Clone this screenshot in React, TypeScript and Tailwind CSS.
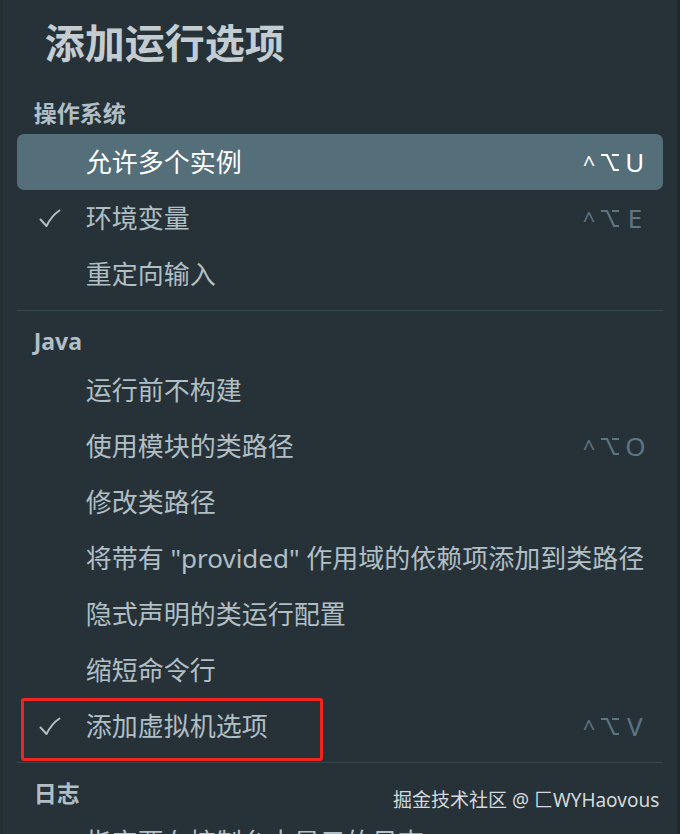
type Item = {
  label: string;
  checked?: boolean;
  active?: boolean;
  shortcut?: string;
  boxed?: boolean;
};

type Section = {
  title: string;
  items: Item[];
};

const sections: Section[] = [
  {
    title: "操作系统",
    items: [
      { label: "允许多个实例", active: true, shortcut: "U" },
      { label: "环境变量", checked: true, shortcut: "E" },
      { label: "重定向输入" },
    ],
  },
  {
    title: "Java",
    items: [
      { label: "运行前不构建" },
      { label: "使用模块的类路径", shortcut: "O" },
      { label: "修改类路径" },
      { label: "将带有 \"provided\" 作用域的依赖项添加到类路径" },
      { label: "隐式声明的类运行配置" },
      { label: "缩短命令行" },
      { label: "添加虚拟机选项", checked: true, shortcut: "V", boxed: true },
    ],
  },
  {
    title: "日志",
    items: [{ label: "指定要在控制台中显示的日志" }],
  },
];

function CheckIcon() {
  return (
    <svg width="22" height="19" viewBox="0 0 22 19" fill="none">
      <path
        d="M1.5 10.5 L7.5 17 C11 10 15 5 20.5 1.5"
        stroke="currentColor"
        strokeWidth="2"
        strokeLinecap="round"
        strokeLinejoin="round"
      />
    </svg>
  );
}

function OptionKey() {
  return (
    <svg width="20" height="19" viewBox="0 0 20 19" fill="none">
      <path
        d="M1 2 H7 L14 17 H19 M12 2 H19"
        stroke="currentColor"
        strokeWidth="2.2"
        strokeLinejoin="miter"
      />
    </svg>
  );
}

function Shortcut({ letter, active }: { letter: string; active?: boolean }) {
  return (
    <div
      className={`flex items-center gap-[5px] text-[26px] leading-none ${
        active ? "text-white" : "text-[#5d7681]"
      }`}
    >
      <span className="mt-[2px] text-[22px]">^</span>
      <OptionKey />
      <span className="w-[19px] text-center">{letter}</span>
    </div>
  );
}

function Row({ item }: { item: Item }) {
  return (
    <div
      className={`relative flex h-[56px] items-center rounded-[7px] pl-[22px] pr-[19px] ${
        item.active ? "bg-[#546e7a] text-white" : "text-[#b0bec5]"
      }`}
    >
      <div className="flex w-[47px] text-[#b0bec5]">{item.checked && <CheckIcon />}</div>
      <span className="flex-1 whitespace-nowrap text-[26px] leading-none">{item.label}</span>
      {item.shortcut && <Shortcut letter={item.shortcut} active={item.active} />}
      {item.boxed && (
        <div className="pointer-events-none absolute left-[4px] top-0 h-[63px] w-[302px] rounded-[3px] border-[3px] border-[#f2241f]" />
      )}
    </div>
  );
}

export default function App() {
  return (
    <div className="relative flex h-[834px] w-[680px] overflow-hidden bg-[#263238] font-['Noto_Sans','Noto_Sans_CJK_SC',sans-serif]">
      <div className="w-[6px] bg-[#232e33]" />
      <div className="flex-1">
        <h1 className="pl-[42px] pt-[19px] text-[40px] font-bold leading-[48px] text-[#c3ccd1]">
          添加运行选项
        </h1>

        <div className="mt-[31px] px-[14px]">
          {sections.map((section, index) => (
            <div key={section.title}>
              {index > 0 && <div className="mb-[15px] mt-[8px] h-px bg-[#37474f]" />}
              <div className="pl-[17px] text-[23px] font-bold leading-[30px] text-[#b0bec5]">
                {section.title}
              </div>
              <div className="mt-[6px]">
                {section.items.map((item) => (
                  <Row key={item.label} item={item} />
                ))}
              </div>
            </div>
          ))}
        </div>
      </div>
      <div className="w-[6px] bg-[#1f292d]" />

      <div className="absolute left-[393px] top-[788px] whitespace-nowrap text-[19px] leading-[24px] text-[#d3d9dc]">
        掘金技术社区 @ 匚WYHaovous
      </div>
    </div>
  );
}
